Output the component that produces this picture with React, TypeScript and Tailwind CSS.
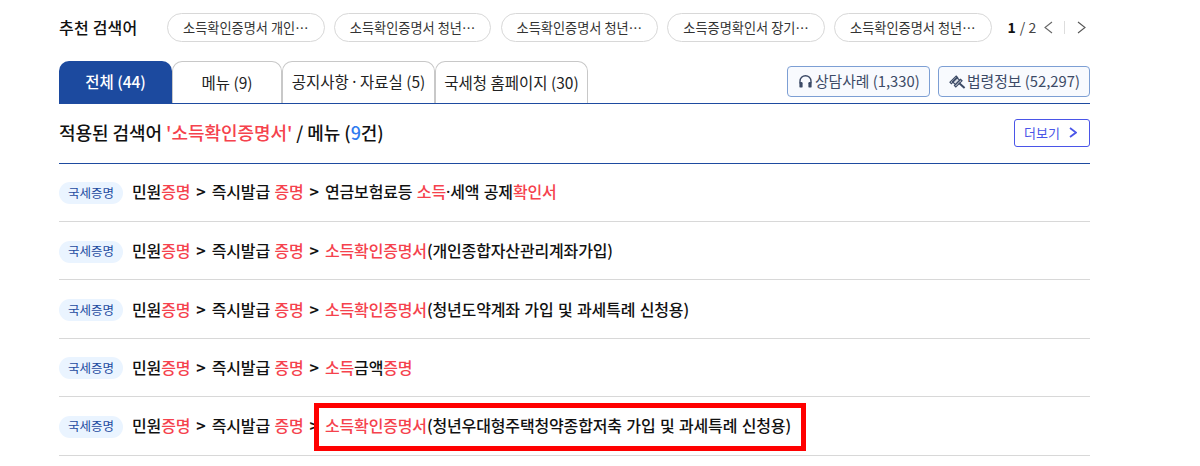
const R = ({ children }: { children: React.ReactNode }) => <span className="text-[#f5424d]">{children}</span>;
const Sep = () => <span className="mx-[1.6px] font-bold">&gt;</span>;
const Dot = () => <span className="font-['Noto_Sans']">·</span>;

const Chev = ({ dir, w, h, sw, color }: { dir: "l" | "r"; w: number; h: number; sw: number; color: string }) => (
  <svg width={w} height={h} viewBox={`0 0 ${w} ${h}`} fill="none" className="shrink-0">
    <polyline
      points={dir === "r" ? `1,1 ${w - 1},${h / 2} 1,${h - 1}` : `${w - 1},1 1,${h / 2} ${w - 1},${h - 1}`}
      stroke={color}
      strokeWidth={sw}
    />
  </svg>
);

const HeadsetIcon = () => (
  <svg width="13" height="13" viewBox="0 0 13 13" fill="none" className="shrink-0">
    <path d="M1 8V6.2a5.5 5.5 0 0 1 11 0V8" stroke="#3c4a66" strokeWidth="1.4" />
    <rect x="0.4" y="7" width="3.2" height="5.6" rx="1.2" fill="#3c4a66" />
    <rect x="9.4" y="7" width="3.2" height="5.6" rx="1.2" fill="#3c4a66" />
  </svg>
);

const GavelIcon = () => (
  <svg width="17" height="14" viewBox="0 0 17 14" fill="none" className="shrink-0">
    <g stroke="#3c4a66" strokeWidth="1.2">
      <path d="M1 7.2 7.2 1l1.4 1.4-6.2 6.2Z" fill="#fff" />
      <path d="M5.4 10.6 11.6 4.4 13 5.8 6.8 12Z" fill="#fff" />
      <path d="M3.4 6.6 7.8 2.6 10.8 5.2 6.4 9.6Z" fill="#3c4a66" fillOpacity="0.15" />
    </g>
    <path d="m10 8 5.6 5" stroke="#3c4a66" strokeWidth="2" />
  </svg>
);

const chips = ["소득확인증명서 개인…", "소득확인증명서 청년…", "소득확인증명서 청년…", "소득증명확인서 장기…", "소득확인증명서 청년…"];
const tabs: { t: React.ReactNode; w: string; on?: boolean }[] = [
  { t: "전체 (44)", w: "w-[113px]", on: true },
  { t: "메뉴 (9)", w: "w-[110px]" },
  { t: <span>공지사항 <Dot /> 자료실 (5)</span>, w: "w-[153px]" },
  { t: "국세청 홈페이지 (30)", w: "w-[153px]" },
];
const prefix = (
  <>
    민원<R>증명</R> <Sep /> 즉시발급 <R>증명</R> <Sep />{" "}
  </>
);
const rows: React.ReactNode[] = [
  <>연금보험료등 <R>소득</R><Dot />세액 공제<R>확인서</R></>,
  <><R>소득확인증명서</R>(개인종합자산관리계좌가입)</>,
  <><R>소득확인증명서</R>(청년도약계좌 가입 및 과세특례 신청용)</>,
  <><R>소득</R>금액<R>증명</R></>,
  <><R>소득확인증명서</R>(청년우대형주택청약종합저축 가입 및 과세특례 신청용)</>,
];

export default function App() {
  return (
    <div className="relative h-[466px] w-[1200px] overflow-hidden bg-white font-['Noto_Sans_CJK_KR','Noto_Sans',sans-serif] text-[#111]">
      <div className="ml-[59px] w-[1031px]">
        <div className="flex h-[61px] items-start pt-[13px]">
          <div className="w-[108px] text-[16px] font-medium leading-[28px] tracking-[0.2px]">추천 검색어</div>
          <div className="flex gap-[9.25px]">
            {chips.map((c, i) => (
              <div key={i} className="flex h-[29px] w-[157.5px] items-center justify-center whitespace-nowrap rounded-full border border-[#d8d8d8] text-[13.2px] text-[#333]">{c}</div>
            ))}
          </div>
          <div className="ml-4 flex h-[28px] items-center whitespace-nowrap text-[14px] text-[#444]">
            <b className="font-bold text-[#111]">1</b><span className="ml-1">/ 2</span>
            <span className="ml-[8px]"><Chev dir="l" w={9} h={13} sw={1.1} color="#666" /></span>
            <span className="ml-[11px] h-[13px] w-px bg-[#ddd]" />
            <span className="ml-[12px]"><Chev dir="r" w={9} h={13} sw={1.1} color="#555" /></span>
          </div>
        </div>

        <div className="flex h-[43px] items-start justify-between border-b border-[#1e4ba0]">
          <div className="flex">
            {tabs.map((t, i) => (
              <div key={i} className={`flex h-[42px] items-center justify-center whitespace-nowrap rounded-t-[10px] text-[15.5px] ${t.w} ${t.on ? "bg-[#1c4a9f] font-medium text-white" : "border border-b-0 border-[#c8c8c8] bg-white text-[#222]"}`}>{t.t}</div>
            ))}
          </div>
          <div className="mt-[5px] flex gap-2">
            <div className="flex h-[31px] w-[143px] items-center gap-[3px] whitespace-nowrap rounded-[4px] border border-[#7d9fd4] bg-[#f8fafe] pl-[11px] text-[14.8px] text-[#3c4a66]">
              <HeadsetIcon />상담사례 (1,330)
            </div>
            <div className="flex h-[31px] w-[152px] items-center gap-[1px] whitespace-nowrap rounded-[4px] border border-[#7d9fd4] bg-[#f8fafe] pl-[10px] text-[14.8px] text-[#3c4a66]">
              <GavelIcon />법령정보 (52,297)
            </div>
          </div>
        </div>

        <div className="flex h-[59.6px] items-center justify-between border-b border-[#1e4ba0] pb-[1px]">
          <div className="text-[18px] font-medium tracking-[-0.05px]">
            적용된 검색어 <R>'소득확인증명서'</R> / 메뉴 (<span className="text-[#2f7bf0]">9</span>건)
          </div>
          <div className="flex h-[28px] w-[76px] items-center gap-[9px] rounded-[3px] border border-[#4a55e8] pl-[9px] text-[13px] text-[#4a55e8]">
            더보기 <Chev dir="r" w={8} h={11} sw={1.8} color="#4a55e8" />
          </div>
        </div>

        {rows.map((r, i) => (
          <div key={i} className="flex h-[58.4px] items-center gap-[9px] border-b border-[#d8d8d8]">
            <span className="mt-[2px] flex h-[22px] w-[64px] items-center justify-center rounded-full bg-[#eaf4ff] text-[12.5px] text-[#1e4ba0]">국세증명</span>
            <span className="mb-[1px] text-[16px] font-medium leading-[22px] tracking-[-0.15px] [word-spacing:1px]">{prefix}{r}</span>
          </div>
        ))}
      </div>
      <div className="absolute left-[314px] top-[403px] h-[48px] w-[492px] border-[5px] border-[#ff0000]" />
    </div>
  );
}
